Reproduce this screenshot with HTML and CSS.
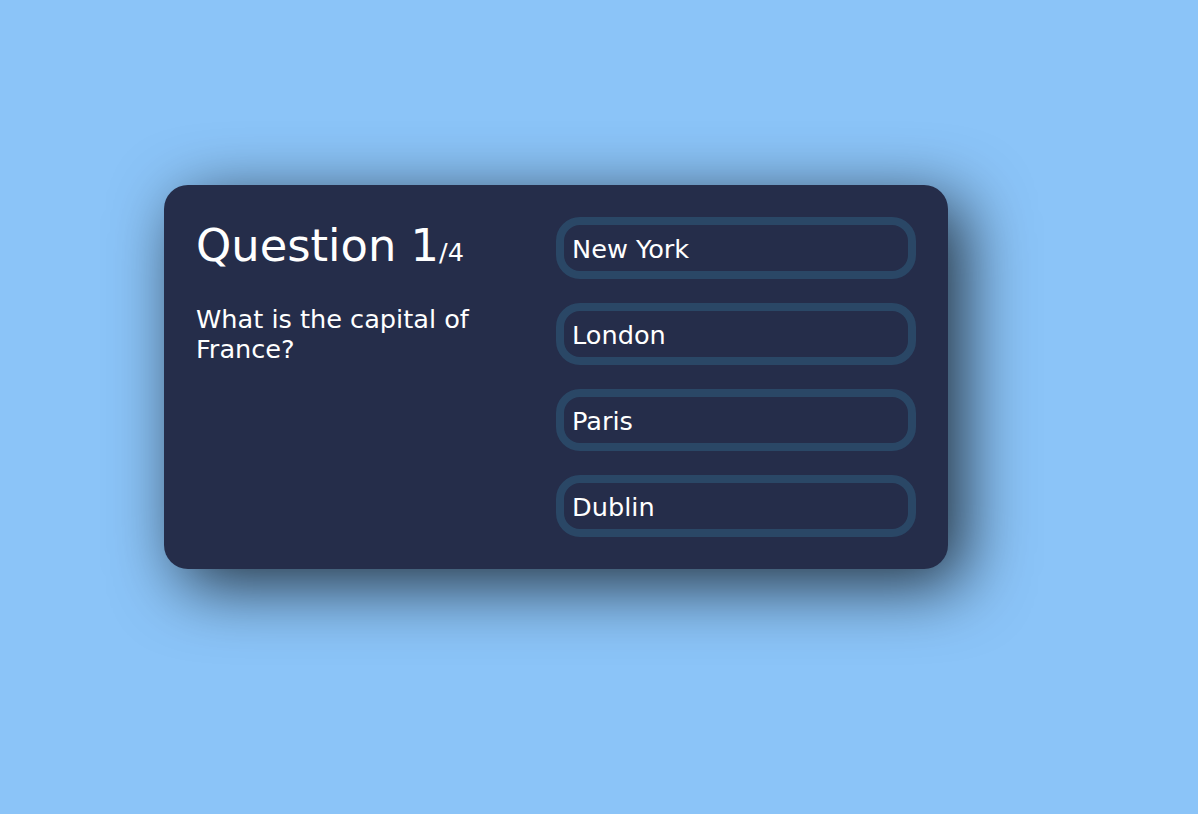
FILE: index.html
```html
<!DOCTYPE html>
<html lang="en">
<head>
<meta charset="utf-8">
<title>Quiz</title>
<link rel="stylesheet" href="styles.css">
</head>
<body>
<div class="app">
  <div class="question-section">
    <div class="question-count"><span class="count-num">Question 1</span>/4</div>
    <div class="question-text">What is the capital of France?</div>
  </div>
  <div class="answer-section">
    <button class="answer">New York</button>
    <button class="answer">London</button>
    <button class="answer">Paris</button>
    <button class="answer">Dublin</button>
  </div>
</div>
</body>
</html>
```

FILE: styles.css
```css
html, body {
  margin: 0;
  padding: 0;
}
body {
  background: #8bc4f8;
  min-height: 814px;
  box-sizing: border-box;
  padding: 185px 0 0 164px;
  font-family: "DejaVu Sans", Verdana, sans-serif;
  color: #ffffff;
}
.app {
  width: 784px;
  height: 384px;
  box-sizing: border-box;
  padding: 32px;
  background: #252d4a;
  border-radius: 24px;
  box-shadow: 16px 16px 67px 0 rgba(0, 0, 0, 0.75);
  display: flex;
  justify-content: space-evenly;
}
.question-section {
  width: 100%;
}
.question-count {
  font-size: 25.6px;
  margin-top: 2px;
  margin-bottom: 32px;
}
.count-num {
  font-size: 44.8px;
}
.question-text {
  font-size: 25.6px;
  padding-right: 20px;
}
.answer-section {
  width: 100%;
  display: flex;
  flex-direction: column;
  justify-content: space-between;
}
.answer {
  width: 100%;
  box-sizing: border-box;
  font-family: "DejaVu Sans", Verdana, sans-serif;
  font-size: 25.6px;
  color: #ffffff;
  background: #252d4a;
  border-radius: 24px;
  display: flex;
  padding: 9px 8px 7px;
  justify-content: flex-start;
  align-items: center;
  border: 8px solid #2a4766;
  cursor: pointer;
  text-align: left;
}
```
